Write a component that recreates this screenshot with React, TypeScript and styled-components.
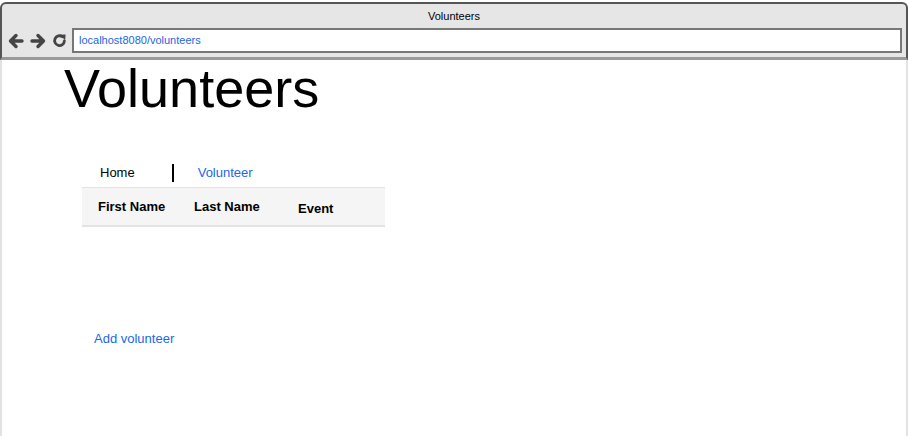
import React from "react";
import styled, { createGlobalStyle } from "styled-components";

const GlobalStyle = createGlobalStyle`
  html, body {
    margin: 0;
    padding: 0;
    background: #ffffff;
    font-family: "Liberation Sans", Arial, sans-serif;
  }
`;

const columns = [
  { label: "First Name", offset: 0 },
  { label: "Last Name", offset: 0 },
  { label: "Event", offset: 2 },
];

const App = () => {
  return (
    <>
      <GlobalStyle />
      <BrowserFrame>
        <Toolbar>
          <WindowTitle>Volunteers</WindowTitle>
          <AddressRow>
            <NavIcons>
              <svg width="16" height="16" viewBox="0 0 16 16">
                <path d="M14 8H3M8 2.5L2.5 8 8 13.5" fill="none" stroke="#444" strokeWidth="3.4" strokeLinecap="round" strokeLinejoin="round" />
              </svg>
              <svg width="16" height="16" viewBox="0 0 16 16">
                <path d="M2 8h11M8 2.5L13.5 8 8 13.5" fill="none" stroke="#444" strokeWidth="3.4" strokeLinecap="round" strokeLinejoin="round" />
              </svg>
              <svg width="15" height="15" viewBox="0 0 16 16">
                <path d="M13.2 8.5a5.2 5.2 0 1 1-2.2-4.6" fill="none" stroke="#444" strokeWidth="3" strokeLinecap="round" />
                <path d="M8.5 1.8L14.5 1.5 14 7.6z" fill="#444" />
              </svg>
            </NavIcons>
            <AddressBar>localhost8080/volunteers</AddressBar>
          </AddressRow>
        </Toolbar>
        <Page>
          <Heading>Volunteers</Heading>
          <Section>
            <NavBar>
              <NavLink>Home</NavLink>
              <NavDivider />
              <NavLink active>Volunteer</NavLink>
            </NavBar>
            <TableHeader>
              {columns.map((c) => (
                <HeaderCell key={c.label} shift={c.offset}>
                  {c.label}
                </HeaderCell>
              ))}
            </TableHeader>
            <AddLink>Add volunteer</AddLink>
          </Section>
        </Page>
      </BrowserFrame>
    </>
  );
};

const BrowserFrame = styled.div`
  width: 908px;
  height: 436px;
  box-sizing: border-box;
  display: flex;
  flex-direction: column;
  padding-top: 2px;
  overflow: hidden;
`;

const Toolbar = styled.div`
  background: #e6e6e6;
  border: 2px solid #555;
  border-radius: 6px 6px 0 0;
  box-sizing: border-box;
  display: flex;
  flex-direction: column;
  border-bottom: 3px solid #999;
  height: 58px;
  box-shadow: 0 1px 0 #c8c8c8;
`;

const WindowTitle = styled.div`
  text-align: center;
  font-size: 11px;
  color: #000;
  padding-top: 6px;
  height: 18px;
`;

const AddressRow = styled.div`
  display: flex;
  align-items: center;
  padding: 0 4px 0 6px;
  gap: 4px;
`;

const NavIcons = styled.div`
  display: flex;
  align-items: center;
  gap: 6px;
  width: 60px;
`;

const AddressBar = styled.div`
  flex: 1;
  height: 25px;
  box-sizing: border-box;
  background: #fff;
  border: 2px solid #777;
  font-size: 11px;
  color: #2266e8;
  padding: 0 5px;
  line-height: 21px;
`;

const Page = styled.div`
  flex: 1;
  background: #fff;
  border-left: 2px solid #e2e2e2;
  border-right: 2px solid #e2e2e2;
  padding-left: 62px;
`;

const Heading = styled.h1`
  margin: 0;
  font-weight: normal;
  font-size: 54px;
  line-height: 56px;
  color: #000;
`;

const Section = styled.div`
  padding-left: 18px;
  padding-top: 42px;
  width: 303px;
`;

const NavBar = styled.div`
  display: flex;
  align-items: center;
  height: 29px;
  padding-left: 18px;
`;

const NavLink = styled.span<{ active?: boolean }>`
  font-size: 13px;
  color: ${(p) => (p.active ? "#2266e8" : "#000")};
`;

const NavDivider = styled.span`
  width: 2px;
  height: 18px;
  background: #000;
  margin: 0 24px 0 37px;
`;

const TableHeader = styled.div`
  display: grid;
  grid-template-columns: 96px 104px 1fr;
  align-items: center;
  height: 37px;
  padding-left: 16px;
  background: #f5f5f5;
  border-top: 1px solid #e3e3e3;
  border-bottom: 2px solid #e3e3e3;
`;

const HeaderCell = styled.div<{ shift: number }>`
  font-size: 13px;
  font-weight: bold;
  color: #000;
  padding-top: ${(p) => p.shift * 2}px;
`;

const AddLink = styled.div`
  margin-top: 104px;
  padding-left: 12px;
  font-size: 13px;
  color: #2266e8;
`;

export default App;
